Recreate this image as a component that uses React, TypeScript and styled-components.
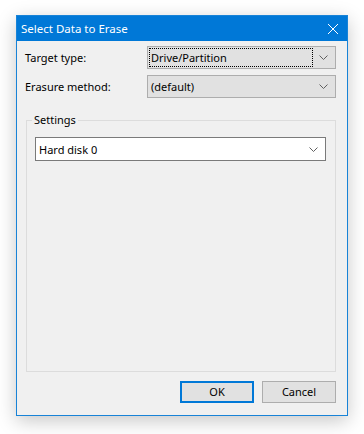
import React from "react";
import styled, { createGlobalStyle } from "styled-components";

const Global = createGlobalStyle`
  html, body { margin: 0; padding: 0; background: #ffffff; }
  body { font-family: "Noto Sans", "Open Sans", sans-serif; font-size: 11px; }
  * { box-sizing: border-box; }
`;

const Page = styled.div`
  padding: 15px 0 0 16px;
  width: 364px;
  height: 434px;
`;

const Window = styled.div`
  width: 332px;
  height: 401px;
  border: 1px solid #1883d7;
  background: #f0f0f0;
  display: flex;
  flex-direction: column;
  box-shadow: 0 5px 18px rgba(0, 0, 0, 0.22);
`;

const TitleBar = styled.div`
  height: 25px;
  background: #0078d7;
  color: #ffffff;
  display: flex;
  align-items: center;
  justify-content: space-between;
  padding: 0 9px 0 4px;
  font-size: 11.5px;
`;

const Title = styled.span`
  line-height: 16px;
`;

const CloseIcon = styled.svg`
  width: 10px;
  height: 10px;
  display: block;
`;

const Body = styled.div`
  flex: 1;
  display: flex;
  flex-direction: column;
  padding: 5px 11px 12px 8px;
  color: #000000;
`;

const FieldRow = styled.div`
  display: flex;
  align-items: center;
  justify-content: space-between;
  margin-bottom: 6px;
`;

const Label = styled.span``;

const Combo = styled.div<{ $white?: boolean; $width: number }>`
  width: ${(p) => p.$width}px;
  height: ${(p) => (p.$white ? 24 : 23)}px;
  border: 1px solid ${(p) => (p.$white ? "#7a7a7a" : "#adadad")};
  background: ${(p) => (p.$white ? "#ffffff" : "#e1e1e1")};
  display: flex;
  align-items: center;
  padding: 0 7px 0 1px;
`;

const ComboText = styled.span<{ $focus?: boolean }>`
  flex: 1;
  height: 19px;
  line-height: 17px;
  padding-left: 1px;
  border: 1px dotted ${(p) => (p.$focus ? "#000000" : "transparent")};
  margin-right: 6px;
  white-space: nowrap;
`;

const Chevron = styled.svg`
  width: 9px;
  height: 5px;
  display: block;
`;

const Group = styled.fieldset`
  margin: 8px 0 0 1px;
  border: 1px solid #dcdcdc;
  padding: 9px 8px 0 8px;
  flex: 1;
  min-width: 0;
`;

const Legend = styled.legend`
  padding: 0 2px;
  margin-left: -3px;
  height: 16px;
  line-height: 16px;
`;

const ButtonRow = styled.div`
  display: flex;
  justify-content: flex-end;
  gap: 8px;
  margin-top: 9px;
`;

const Button = styled.button<{ $default?: boolean }>`
  width: 74px;
  height: 22px;
  font-family: inherit;
  font-size: 11px;
  color: #000000;
  background: #e1e1e1;
  border: ${(p) => (p.$default ? "2px solid #0078d7" : "1px solid #adadad")};
  padding: 0;
  line-height: 16px;
`;

const ChevronIcon = () => (
  <Chevron viewBox="0 0 9 5">
    <path d="M0.5 0.5 L4.5 4.5 L8.5 0.5" fill="none" stroke="#606060" strokeWidth="1" />
  </Chevron>
);

export default function App() {
  return (
    <Page>
      <Global />
      <Window>
        <TitleBar>
          <Title>Select Data to Erase</Title>
          <CloseIcon viewBox="0 0 10 10">
            <path d="M0 0 L10 10 M10 0 L0 10" stroke="#ffffff" strokeWidth="1" />
          </CloseIcon>
        </TitleBar>
        <Body>
          <FieldRow>
            <Label>Target type:</Label>
            <Combo $width={189}>
              <ComboText $focus>Drive/Partition</ComboText>
              <ChevronIcon />
            </Combo>
          </FieldRow>
          <FieldRow>
            <Label>Erasure method:</Label>
            <Combo $width={189}>
              <ComboText>(default)</ComboText>
              <ChevronIcon />
            </Combo>
          </FieldRow>
          <Group>
            <Legend>Settings</Legend>
            <Combo $white $width={291}>
              <ComboText>Hard disk 0</ComboText>
              <ChevronIcon />
            </Combo>
          </Group>
          <ButtonRow>
            <Button $default>OK</Button>
            <Button>Cancel</Button>
          </ButtonRow>
        </Body>
      </Window>
    </Page>
  );
}
